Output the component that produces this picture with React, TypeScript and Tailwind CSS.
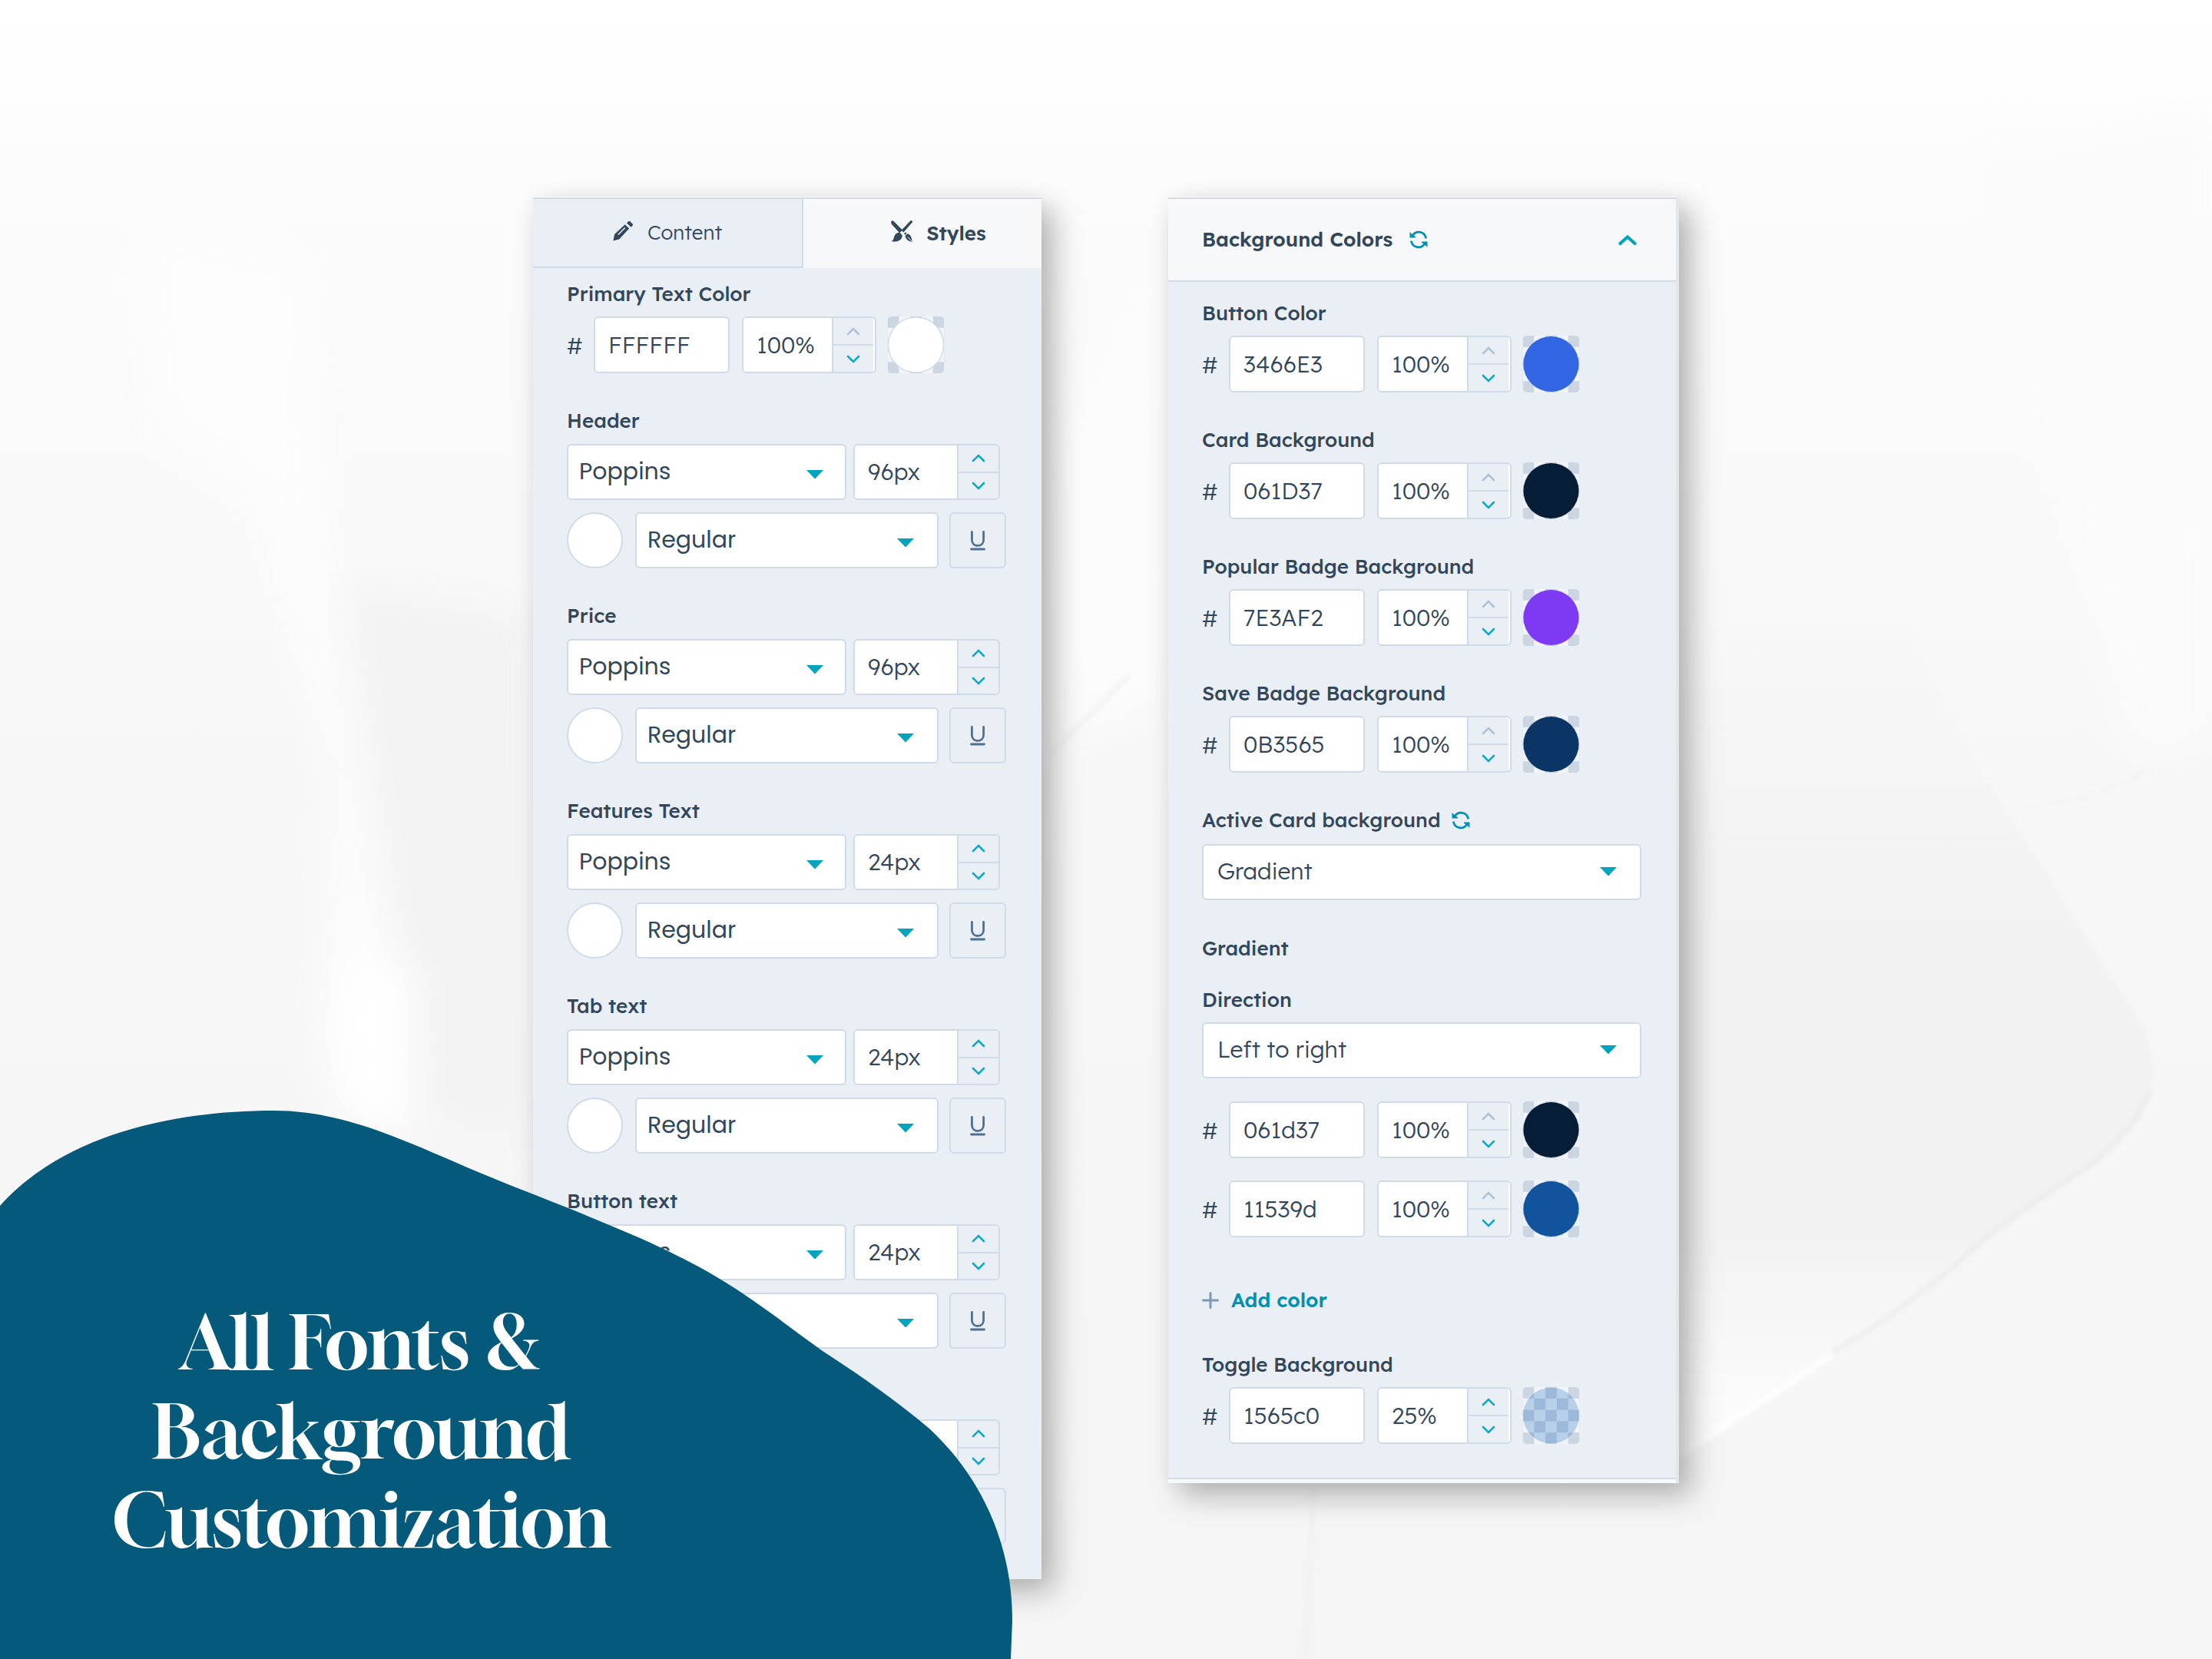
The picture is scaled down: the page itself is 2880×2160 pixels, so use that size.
import { useId, type ReactNode } from "react";

const inputClass =
  "h-[74px] rounded-md border-2 border-[#d0dbe7] bg-white text-[30px] font-light text-[#33475b] outline-none";

function Label({ children, htmlFor }: { children: ReactNode; htmlFor?: string }) {
  return (
    <label htmlFor={htmlFor} className="block text-[26px] leading-8 font-medium text-[#33475b]">
      {children}
    </label>
  );
}

function Chevron({ down, muted }: { down?: boolean; muted?: boolean }) {
  return (
    <svg width="18" height="11" viewBox="0 0 18 11" fill="none" aria-hidden="true">
      <path
        d={down ? "M2 2l7 7 7-7" : "M2 9l7-7 7 7"}
        stroke={muted ? "#b0c1d4" : "#0fa9c0"}
        strokeWidth="2.6"
        strokeLinecap="round"
      />
    </svg>
  );
}

function NumberField({
  id,
  value,
  label,
  maxed,
  wide,
}: {
  id?: string;
  value: string;
  label: string;
  maxed?: boolean;
  wide?: boolean;
}) {
  return (
    <div
      className={`flex overflow-hidden rounded-md border-2 border-[#d0dbe7] bg-white ${
        wide ? "h-[73px] w-[191px]" : "h-[74px] w-[175px] pr-0.5"
      }`}
    >
      <input
        id={id}
        aria-label={label}
        defaultValue={value}
        className="min-w-0 flex-1 bg-white pl-[17px] text-[30px] font-light text-[#33475b] outline-none"
      />
      <div className="flex w-[54px] shrink-0 flex-col border-l-2 border-[#d0dbe7] bg-[#eaeff6]">
        <button
          type="button"
          aria-label={`Increase ${label}`}
          className="flex flex-1 items-center justify-center border-b-2 border-[#d0dbe7]"
        >
          <Chevron muted={maxed} />
        </button>
        <button
          type="button"
          aria-label={`Decrease ${label}`}
          className="flex flex-1 items-center justify-center"
        >
          <Chevron down />
        </button>
      </div>
    </div>
  );
}

function Swatch({ color, opacity = 1, ring }: { color: string; opacity?: number; ring?: boolean }) {
  const id = useId();
  return (
    <button type="button" aria-label="Pick color" className="h-[74px] w-[75px] shrink-0 overflow-hidden rounded-md">
      <svg width="75" height="74" viewBox="0 0 75 75" aria-hidden="true">
        <defs>
          <pattern id={id} width="30" height="30" patternUnits="userSpaceOnUse">
            <rect width="30" height="30" fill="#f1f4f8" />
            <rect width="15" height="15" fill="#cbd6e2" />
            <rect x="15" y="15" width="15" height="15" fill="#cbd6e2" />
          </pattern>
        </defs>
        <rect width="75" height="75" fill={`url(#${id})`} />
        <circle
          cx="37.5"
          cy="37.5"
          r="36.5"
          fill={color}
          fillOpacity={opacity}
          stroke={ring ? "#d0dbe7" : color}
          strokeOpacity={ring ? 1 : 0.1}
          strokeWidth="1.5"
        />
      </svg>
    </button>
  );
}

function ColorRow({
  id,
  hex,
  alpha = "100%",
  color,
  opacity,
  ring,
}: {
  id: string;
  hex: string;
  alpha?: string;
  color: string;
  opacity?: number;
  ring?: boolean;
}) {
  return (
    <div className="flex items-center">
      <span className="w-[35px] shrink-0 pt-0.5 text-[30px] leading-9 font-light text-[#33475b]">#</span>
      <input
        id={id}
        aria-label={`Hex value ${hex}`}
        defaultValue={hex}
        className={`w-[177px] pl-[17px] ${inputClass}`}
      />
      <div className="ml-4">
        <NumberField value={alpha} label="opacity" maxed={alpha === "100%"} />
      </div>
      <div className="ml-3.5 flex">
        <Swatch color={color} opacity={opacity} ring={ring} />
      </div>
    </div>
  );
}

function Select({
  id,
  value,
  label,
  options,
  className,
  textClass,
  caret,
}: {
  id?: string;
  value: string;
  label: string;
  options: string[];
  className: string;
  textClass: string;
  caret: string;
}) {
  return (
    <div className={`relative h-[73px] ${className}`}>
      <select
        id={id}
        aria-label={label}
        defaultValue={value}
        className={`h-full w-full appearance-none rounded-md border-2 border-[#d0dbe7] bg-white text-[30px] text-[#33475b] outline-none ${textClass}`}
      >
        {options.map((o) => (
          <option key={o}>{o}</option>
        ))}
      </select>
      <svg
        width="22"
        height="12"
        viewBox="0 0 22 12"
        aria-hidden="true"
        className={`pointer-events-none absolute ${caret}`}
      >
        <path d="M0 0h22L11 11.5z" fill="#00a4bd" />
      </svg>
    </div>
  );
}

function FontSection({ title, size }: { title: string; size: string }) {
  const id = useId();
  return (
    <section className="mt-[46px]">
      <Label htmlFor={id}>{title}</Label>
      <div className="mt-3.5 flex gap-[9px]">
        <Select
          id={id}
          value="Poppins"
          label={`${title} font`}
          options={["Poppins", "Inter", "Lato"]}
          className="w-[364px]"
          textClass="pl-3.5 pb-[3px] font-[Poppins,'Lexend_Deca',Inter,sans-serif]"
          caret="top-[34px] right-[30px]"
        />
        <NumberField value={size} label={`${title} size`} wide />
      </div>
      <div className="mt-4 flex">
        <button
          type="button"
          aria-label={`${title} color`}
          className="size-[73px] rounded-full border-2 border-[#d0dbe7] bg-white"
        />
        <Select
          value="Regular"
          label={`${title} weight`}
          options={["Regular", "Medium", "Bold"]}
          className="ml-4 w-[395px]"
          textClass="pl-3.5 pb-[3px] font-[Poppins,'Lexend_Deca',Inter,sans-serif]"
          caret="top-[34px] right-8"
        />
        <button
          type="button"
          aria-label={`${title} underline`}
          className="ml-3.5 flex h-[73px] w-[74px] items-center justify-center rounded-md border-2 border-[#d0dbe7]"
        >
          <svg width="20" height="26" viewBox="0 0 20 26" fill="none" stroke="#516f90" strokeWidth="2.8" aria-hidden="true">
            <path d="M2.4 1.5v10.200c0 4.600 3 7.700 7.600 7.700s7.600-3.100 7.600-7.700V1.500" strokeLinecap="round" />
            <path d="M1.500 24h17" strokeLinecap="round" />
          </svg>
        </button>
      </div>
    </section>
  );
}

function RefreshIcon() {
  return (
    <svg width="24" height="24" viewBox="0 0 24 24" fill="none" aria-hidden="true">
      <path d="M4.200 6.600A9.500 9.500 0 0 1 21.600 10.400" stroke="#0091ae" strokeWidth="2.800" />
      <path d="M0.500 2l2.200 2.200L8 8.200 7.800 9.400H0.500z" fill="#0091ae" />
      <path d="M19.800 17.400A9.500 9.500 0 0 1 2.400 13.600" stroke="#0091ae" strokeWidth="2.800" />
      <path d="M23.500 22l-2.200-2.200L16 15.800l.2-1.200h7.300z" fill="#0091ae" />
    </svg>
  );
}

function PencilIcon() {
  return (
    <svg width="27" height="27" viewBox="0 0 27 27" fill="#33475b" aria-hidden="true">
      <path d="M0.500 26.500l1.600-8.400L15.800 5.200l5.400 5.400L8.200 24.400z" />
      <path d="M18 3.400l2.400-2.400q.8-.7 1.600 0l3.800 3.800q.8.800 0 1.600l-2.200 2.400z" />
      <path d="M6.800 18.600L15.800 9.400" stroke="#eaeff6" strokeWidth="1.500" />
    </svg>
  );
}

function BrushesIcon() {
  return (
    <svg width="28" height="28" viewBox="0 0 28 28" fill="#33475b" aria-hidden="true">
      <path d="M.6.800Q2-.4 3.600.900L15 12.400l-3.700 4L1 5Q-.4 2.600.6.800z" />
      <path d="M27.600.500q.9 1-.1 2.200L16.400 15.400l-2.800-2.600L25.300.600q1.300-1 2.300-.1z" />
      <path d="M11.500 15.900l3 2.800c1.400 5.300-4.800 10.600-14.300 8.400 3.500-1.100 2.900-3.200 4-6.100 1.200-3.600 4.500-5.500 7.300-5.100z" />
      <path d="M17 17l2.200-1.800 1.300 1.500-2.200 2z" />
      <path d="M18.600 19.800l3-2.600c3 1 5.300 3.200 6 10.500-5.200-.4-8.600-3.300-9-7.900z" />
      <path d="M21.800 21.400l5 5.600" stroke="#f6f8fb" strokeWidth="1" />
    </svg>
  );
}

function Backdrop() {
  return (
    <svg
      className="absolute inset-0 h-full w-full"
      viewBox="0 0 2880 2160"
      preserveAspectRatio="xMidYMid slice"
      aria-hidden="true"
    >
      <defs>
        <linearGradient id="paper" x1="0" y1="0" x2="0" y2="1">
          <stop offset="0" stopColor="#ffffff" />
          <stop offset="0.150" stopColor="#fbfbfb" />
          <stop offset="0.500" stopColor="#f7f7f7" />
          <stop offset="1" stopColor="#f5f5f5" />
        </linearGradient>
        <linearGradient id="fold" x1="2450" y1="800" x2="2450" y2="1860" gradientUnits="userSpaceOnUse">
          <stop offset="0" stopColor="#f2f2f2" stopOpacity="0" />
          <stop offset="0.400" stopColor="#f2f2f2" />
          <stop offset="0.750" stopColor="#f2f2f2" />
          <stop offset="1" stopColor="#fcfcfc" />
        </linearGradient>
        <filter id="soft" x="-20%" y="-20%" width="140%" height="140%">
          <feGaussianBlur stdDeviation="26" />
        </filter>
        <filter id="crease" x="-20%" y="-20%" width="140%" height="140%">
          <feGaussianBlur stdDeviation="3" />
        </filter>
      </defs>
      <rect width="2880" height="2160" fill="url(#paper)" />
      <g filter="url(#soft)">
        <path d="M180 290L400 330 420 700 560 1100 520 1480 420 1380 440 1000 330 640 200 560z" fill="#fdfdfd" />
        <path d="M440 760L690 800V1480L560 1460 500 1180z" fill="#f3f3f3" />
        <path d="M440 1260h100v200h-100z" fill="#ffffff" />
        <path d="M2560 200L2880 150V960L2780 980z" fill="#fbfbfb" />
        <path d="M1380 560L1500 300 1520 900 1380 960z" fill="#fcfcfc" />
      </g>
      <g filter="url(#crease)" fill="none">
        <path
          d="M2180 760L2460 760C2510 860 2560 980 2620 1067L2717 1220 2784 1327C2812 1380 2808 1420 2784 1457C2760 1490 2730 1515 2702 1530C2650 1566 2610 1590 2569 1626C2520 1672 2440 1730 2386 1760L2180 1900z"
          fill="url(#fold)"
        />
        <path
          d="M2800 1420C2780 1470 2730 1515 2702 1530C2650 1566 2610 1590 2569 1626C2520 1672 2440 1730 2386 1760"
          stroke="#e7e7e7"
          strokeWidth="4"
        />
        <path d="M2386 1764L2190 1894" stroke="#ffffff" strokeWidth="6" />
        <path d="M2640 1050Q2740 1040 2800 1000" stroke="#f2f2f2" strokeWidth="4" />
        <path d="M1370 980L1470 880" stroke="#f0f0f0" strokeWidth="5" />
        <path d="M1710 1940L1700 2160" stroke="#efefef" strokeWidth="5" />
      </g>
    </svg>
  );
}

const panelClass =
  "shrink-0 border-t border-t-white bg-[#eaeff6] shadow-[16px_16px_36px_rgba(0,0,0,0.28),0_0_24px_rgba(0,0,0,0.04)]";

function StylesPanel() {
  return (
    <section aria-label="Module editor" className={`w-[662px] pb-[46px] ${panelClass}`}>
      <div role="tablist" className="flex h-[92px] overflow-hidden border-t-2 border-[#d0dbe7]">
        <button
          type="button"
          role="tab"
          aria-selected="false"
          className="flex w-[352px] shrink-0 items-center justify-center gap-[18px] border-r-2 border-b-2 border-[#d0dbe7] text-[26px] leading-8 font-light text-[#33475b]"
        >
          <span className="pb-1.5">
            <PencilIcon />
          </span>
          Content
        </button>
        <button
          type="button"
          role="tab"
          aria-selected="true"
          className="flex w-[352px] shrink-0 items-center justify-center gap-[18px] bg-[#f6f8fa] text-[26px] leading-8 font-semibold text-[#33475b]"
        >
          <span className="pb-1.5">
            <BrushesIcon />
          </span>
          Styles
        </button>
      </div>
      <div className="pt-[18px] pl-11">
        <Label htmlFor="primary">Primary Text Color</Label>
        <div className="mt-[13px]">
          <ColorRow id="primary" hex="FFFFFF" color="#ffffff" ring />
        </div>
        <FontSection title="Header" size="96px" />
        <FontSection title="Price" size="96px" />
        <FontSection title="Features Text" size="24px" />
        <FontSection title="Tab text" size="24px" />
        <FontSection title="Button text" size="24px" />
        <FontSection title="Toggle text" size="24px" />
      </div>
    </section>
  );
}

const colors = [
  { id: "button", title: "Button Color", hex: "3466E3", color: "#3366e3" },
  { id: "card", title: "Card Background", hex: "061D37", color: "#061d37" },
  { id: "popular", title: "Popular Badge Background", hex: "7E3AF2", color: "#7e3af2" },
  { id: "save", title: "Save Badge Background", hex: "0B3565", color: "#0b3565" },
];

function BackgroundPanel() {
  return (
    <section
      aria-label="Background colors"
      className={`w-[665px] border-r-4 border-r-[#e4e7ea] ${panelClass}`}
    >
      <header className="flex h-[110px] items-center border-y-2 border-[#d0dbe7] bg-[#f6f8fa] pr-[51px] pl-11">
        <h2 className="text-[26px] leading-8 font-semibold text-[#33475b]">Background Colors</h2>
        <button type="button" aria-label="Reset background colors" className="ml-[22px]">
          <RefreshIcon />
        </button>
        <button type="button" aria-label="Collapse" className="ml-auto">
          <svg width="24" height="15" viewBox="0 0 24 15" fill="none" aria-hidden="true">
            <path d="M2.500 12L12 3.500l9.500 8.500" stroke="#00a4bd" strokeWidth="4.200" strokeLinecap="round" />
          </svg>
        </button>
      </header>
      <div className="pt-[25px] pl-11">
        {colors.map((c) => (
          <div key={c.id} className="mb-[46px]">
            <Label htmlFor={c.id}>{c.title}</Label>
            <div className="mt-[13px]">
              <ColorRow id={c.id} hex={c.hex} color={c.color} />
            </div>
          </div>
        ))}
        <div className="flex items-center gap-3.5">
          <Label htmlFor="active">Active Card background</Label>
          <button type="button" aria-label="Reset active card background">
            <RefreshIcon />
          </button>
        </div>
        <Select
          id="active"
          value="Gradient"
          label="Active card background"
          options={["Gradient", "Solid"]}
          className="mt-[15px] w-[572px]"
          textClass="pl-[18px] pb-[3px] font-light"
          caret="top-[30px] right-8"
        />
        <h3 className="mt-[47px] text-[26px] leading-8 font-medium text-[#33475b]">Gradient</h3>
        <div className="mt-[35px]">
          <Label htmlFor="direction">Direction</Label>
        </div>
        <Select
          id="direction"
          value="Left to right"
          label="Direction"
          options={["Left to right", "Right to left", "Top to bottom"]}
          className="mt-[13px] w-[572px]"
          textClass="pl-[18px] pb-[3px] font-light"
          caret="top-[30px] right-8"
        />
        <div className="mt-[30px] flex flex-col gap-[29px]">
          <ColorRow id="stop-1" hex="061d37" color="#061d37" />
          <ColorRow id="stop-2" hex="11539d" color="#11539d" />
        </div>
        <button
          type="button"
          className="mt-[66px] flex items-center gap-4 text-[26px] leading-8 font-semibold text-[#0091ae]"
        >
          <svg width="22" height="22" viewBox="0 0 22 22" stroke="#7c98b6" strokeWidth="3" strokeLinecap="round" aria-hidden="true">
            <path d="M11 1.500v19M1.500 11h19" />
          </svg>
          Add color
        </button>
        <div className="mt-[52px]">
          <Label htmlFor="toggle">Toggle Background</Label>
        </div>
        <div className="mt-[13px]">
          <ColorRow id="toggle" hex="1565c0" alpha="25%" color="#1565c0" opacity={0.25} />
        </div>
      </div>
      <div className="mt-11 h-[7px] border-t-2 border-[#d0dbe7] bg-[#f6f8fb]" />
    </section>
  );
}

export default function App() {
  return (
    <div className="relative min-h-screen overflow-hidden bg-white font-['Lexend_Deca',Inter,sans-serif]">
      <Backdrop />
      <main className="relative flex items-start justify-center gap-[165px] pt-64 pb-[104px]">
        <StylesPanel />
        <BackgroundPanel />
      </main>
      <div className="absolute bottom-0 left-0 w-[1318px]">
        <svg className="block w-full" viewBox="0 1445 1318 715" aria-hidden="true">
          <path
            d="M0 1570C80 1480 220 1446 357 1446C450 1446 530 1487 625 1527C680 1550 735 1570 786 1592C850 1618 912 1647 964 1682C1000 1706 1035 1733 1071 1759C1120 1791 1165 1822 1210 1860C1285 1930 1318 2020 1318 2110L1316 2160H0z"
            fill="#05597b"
          />
        </svg>
        <h1 className="absolute bottom-[123px] left-0 w-[940px] text-center font-['Gloock','Liberation_Serif',serif] text-[96px] leading-[116px] font-normal text-white">
          All Fonts &amp;
          <br />
          Background
          <br />
          Customization
        </h1>
      </div>
    </div>
  );
}
